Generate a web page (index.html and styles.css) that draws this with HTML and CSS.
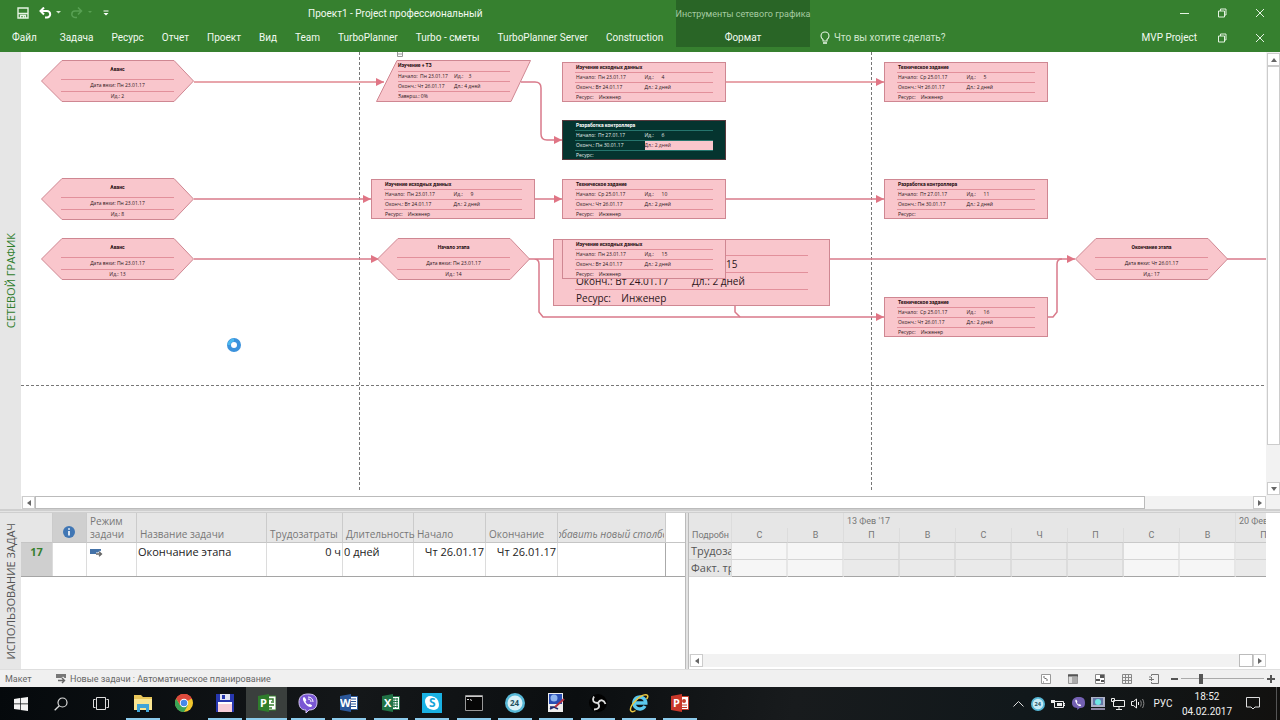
FILE: index.html
```
<!DOCTYPE html>
<html lang="ru">
<head>
<meta charset="utf-8">
<title>Проект1 - Project профессиональный</title>
<link rel="stylesheet" href="styles.css">
</head>
<body>
<header class="ribbon">
  <div class="ribbon-left">
    <div class="title-row">
      <div class="quick">
        <button class="qbtn" aria-label="Сохранить"><svg width="12" height="12" viewBox="0 0 12 12"><path d="M1 1h10v10H1z" fill="none" stroke="#e4f3e2" stroke-width="1.4"/><path d="M1 6.500h10M3.500 11V8.500h5V11M6.500 8.500V11" fill="none" stroke="#e4f3e2" stroke-width="1.300"/></svg></button>
        <button class="qbtn" aria-label="Отменить"><svg width="22" height="12" viewBox="0 0 22 12"><path d="M1.500 4H8a3.200 3.200 0 0 1 0 6.400H6" fill="none" stroke="#fff" stroke-width="2"/><path d="M5 .5L1.500 4 5 7.500" fill="none" stroke="#fff" stroke-width="2"/><path d="M17 4h5l-2.500 2.500z" fill="#cfe6cc"/></svg></button>
        <button class="qbtn" aria-label="Вернуть"><svg width="22" height="12" viewBox="0 0 22 12"><path d="M10.500 4H4a3.200 3.200 0 0 0 0 6.400h2M7 .5L10.500 4 7 7.500" fill="none" stroke="#58a053" stroke-width="1.500"/><path d="M17 4h4l-2 2z" fill="#58a053"/></svg></button>
        <button class="qbtn" aria-label="Настройка панели"><svg width="6" height="8" viewBox="0 0 6 8"><path d="M.5 2h5" stroke="#fff"/><path d="M.5 4h5L3 6.500z" fill="#fff"/></svg></button>
      </div>
      <h1 class="doc-title">Проект1 - Project профессиональный</h1>
    </div>
    <nav class="tabs">
      <button class="tab file">Файл</button>
      <button class="tab">Задача</button>
      <button class="tab">Ресурс</button>
      <button class="tab">Отчет</button>
      <button class="tab">Проект</button>
      <button class="tab">Вид</button>
      <button class="tab">Team</button>
      <button class="tab">TurboPlanner</button>
      <button class="tab">Turbo - сметы</button>
      <button class="tab">TurboPlanner Server</button>
      <button class="tab">Construction</button>
    </nav>
  </div>
  <div class="context">
    <div class="context-name">Инструменты сетевого графика</div>
    <button class="tab">Формат</button>
  </div>
  <div class="ribbon-right">
    <div class="win">
      <button class="wbtn" aria-label="Свернуть"><svg width="10" height="10" viewBox="0 0 10 10"><path d="M1 5.500h9" stroke="#e4f3e2"/></svg></button>
      <button class="wbtn" aria-label="Восстановить"><svg width="10" height="10" viewBox="0 0 10 10"><path d="M1.500 3h6v6h-6zM3.500 3V1h5.500v6H7.500" fill="none" stroke="#e4f3e2"/></svg></button>
      <button class="wbtn" aria-label="Закрыть"><svg width="10" height="10" viewBox="0 0 10 10"><path d="M1 1l8 8M9 1L1 9" stroke="#e4f3e2"/></svg></button>
    </div>
    <div class="win second">
      <button class="tell"><svg width="10" height="14" viewBox="0 0 10 14"><path d="M3 10V8.500C1.500 7.500 1 6.300 1 5a4 4 0 0 1 8 0c0 1.300-.5 2.500-2 3.500V10z" fill="none" stroke="#e4f3e2" stroke-width="1.100"/><path d="M3 12h4" stroke="#e4f3e2" stroke-width="1.600"/></svg>Что вы хотите сделать?</button>
      <span class="user">MVP Project</span>
      <button class="wbtn" aria-label="Восстановить окно"><svg width="10" height="10" viewBox="0 0 10 10"><path d="M1.500 3h6v6h-6zM3.500 3V1h5.500v6H7.500" fill="none" stroke="#e4f3e2"/></svg></button>
      <button class="wbtn" aria-label="Закрыть окно"><svg width="10" height="10" viewBox="0 0 10 10"><path d="M1 1l8 8M9 1L1 9" stroke="#e4f3e2"/></svg></button>
    </div>
  </div>
</header>

<main class="work">
  <section class="network">
    <div class="side active"><span>СЕТЕВОЙ ГРАФИК</span></div>
    <div class="net-main">
      <div class="canvas">
        <svg class="links" width="100%" height="100%">
          <defs>
            <marker id="arrow" markerUnits="userSpaceOnUse" markerWidth="9" markerHeight="8" refX="8" refY="4" orient="auto"><path d="M0 0l8 4-8 4z"/></marker>
          </defs>
          <g class="page-break">
            <path d="M338.500 0V440M850.500 0V440M0 333.500H1245"/>
          </g>
          <g class="link">
            <path class="pale" d="M173 30H363" marker-end="url(#arrow)"/>
            <path class="pale" d="M705 30H863" marker-end="url(#arrow)"/>
            <path d="M500 30H514Q520 30 520 36V82Q520 88 526 88H541" marker-end="url(#arrow)"/>
            <path d="M173 147H350" marker-end="url(#arrow)"/>
            <path d="M514 147H541" marker-end="url(#arrow)"/>
            <path d="M705 147H863" marker-end="url(#arrow)"/>
            <path d="M173 207H358" marker-end="url(#arrow)"/>
            <path d="M508 207H532M513 207Q518 207 518 212V260L522 265H863" marker-end="url(#arrow)"/>
            <path d="M714 254V260L719 265"/>
            <path d="M808 207H1054" marker-end="url(#arrow)"/>
            <path d="M1027 265H1032L1036 260V212Q1036 207 1041 207M1206 207H1245"/>
          </g>
          <path d="M376.500 -1v5.500h5V-1M377 2h4" fill="#fff" stroke="#999"/>
          <circle cx="213" cy="293" r="5" fill="none" stroke="#3c92dc" stroke-width="4"/>
          <path d="M208 293a5 5 0 0 1 5-5" fill="none" stroke="#4bb8ee" stroke-width="3"/>
        </svg>

        <div class="node stone" style="left:20px;top:8px"><svg class="shape" viewBox="0 0 153 42"><path d="M21 .5H133L152.500 21 133 41.500H21L.5 21z"/></svg><b>Аванс</b><span>Дата вехи: Пн 23.01.17</span><span>Ид.: 2</span></div>
        <div class="node stone" style="left:20px;top:126px"><svg class="shape" viewBox="0 0 153 42"><path d="M21 .5H133L152.500 21 133 41.500H21L.5 21z"/></svg><b>Аванс</b><span>Дата вехи: Пн 23.01.17</span><span>Ид.: 8</span></div>
        <div class="node stone" style="left:20px;top:186px"><svg class="shape" viewBox="0 0 153 42"><path d="M21 .5H133L152.500 21 133 41.500H21L.5 21z"/></svg><b>Аванс</b><span>Дата вехи: Пн 23.01.17</span><span>Ид.: 13</span></div>
        <div class="node stone" style="left:356px;top:186px"><svg class="shape" viewBox="0 0 153 42"><path d="M21 .5H133L152.500 21 133 41.500H21L.5 21z"/></svg><b>Начало этапа</b><span>Дата вехи: Пн 23.01.17</span><span>Ид.: 14</span></div>
        <div class="node stone" style="left:1054px;top:186px"><svg class="shape" viewBox="0 0 153 42"><path d="M21 .5H133L152.500 21 133 41.500H21L.5 21z"/></svg><b>Окончание этапа</b><span>Дата вехи: Чт 26.01.17</span><span>Ид.: 17</span></div>

        <div class="node summary" style="left:355px;top:8px"><svg class="shape" viewBox="0 0 155 42"><path d="M21 .5H154.500L135 41.500H.5z"/></svg><b>Изучение + ТЗ</b><p><span>Начало:  Пн 23.01.17</span><span>Ид.:    3</span></p><p><span>Оконч.: Чт 26.01.17</span><span>Дл.: 4 дней</span></p><p><span>Заверш.: 0%</span></p></div>

        <div class="node task" style="left:541px;top:10px"><b>Изучение исходных данных</b><p><span>Начало:  Пн 23.01.17</span><span>Ид.:      4</span></p><p><span>Оконч.: Вт 24.01.17</span><span>Дл.: 2 дней</span></p><p><span>Ресурс:    Инженер</span></p></div>
        <div class="node task" style="left:863px;top:10px"><b>Техническое задание</b><p><span>Начало:  Ср 25.01.17</span><span>Ид.:      5</span></p><p><span>Оконч.: Чт 26.01.17</span><span>Дл.: 2 дней</span></p><p><span>Ресурс:    Инженер</span></p></div>
        <div class="node task selected" style="left:541px;top:68px"><b>Разработка контроллера</b><p><span>Начало:  Пт 27.01.17</span><span>Ид.:      6</span></p><p><span>Оконч.: Пн 30.01.17</span><span class="cell">Дл.: 2 дней</span></p><p><span>Ресурс:</span></p></div>
        <div class="node task" style="left:350px;top:127px"><b>Изучение исходных данных</b><p><span>Начало:  Пн 23.01.17</span><span>Ид.:      9</span></p><p><span>Оконч.: Вт 24.01.17</span><span>Дл.: 2 дней</span></p><p><span>Ресурс:    Инженер</span></p></div>
        <div class="node task" style="left:541px;top:127px"><b>Техническое задание</b><p><span>Начало:  Ср 25.01.17</span><span>Ид.:      10</span></p><p><span>Оконч.: Чт 26.01.17</span><span>Дл.: 2 дней</span></p><p><span>Ресурс:    Инженер</span></p></div>
        <div class="node task" style="left:863px;top:127px"><b>Разработка контроллера</b><p><span>Начало:  Пт 27.01.17</span><span>Ид.:      11</span></p><p><span>Оконч.: Пн 30.01.17</span><span>Дл.: 2 дней</span></p><p><span>Ресурс:</span></p></div>
        <div class="node task zoomed" style="left:532px;top:187px"><b></b><p><span></span><span class="big-id">15</span></p><p><span>Оконч.: Вт 24.01.17</span><span>Дл.: 2 дней</span></p><p><span>Ресурс:    Инженер</span></p></div>
        <div class="node task" style="left:541px;top:187px"><b>Изучение исходных данных</b><p><span>Начало:  Пн 23.01.17</span><span>Ид.:      15</span></p><p><span>Оконч.: Вт 24.01.17</span><span>Дл.: 2 дней</span></p><p><span>Ресурс:    Инженер</span></p></div>
        <div class="node task" style="left:863px;top:245px"><b>Техническое задание</b><p><span>Начало:  Ср 25.01.17</span><span>Ид.:      16</span></p><p><span>Оконч.: Чт 26.01.17</span><span>Дл.: 2 дней</span></p><p><span>Ресурс:    Инженер</span></p></div>
      </div>
      <div class="hscroll">
        <button class="sbtn" aria-label="Влево"><svg width="4" height="6"><path d="M4 0v6L0 3z"/></svg></button>
        <div class="thumb grow-net"></div><div class="gap-net"></div>
        <button class="sbtn" aria-label="Вправо"><svg width="4" height="6"><path d="M0 0v6l4-3z"/></svg></button>
      </div>
    </div>
    <div class="vscroll">
      <button class="sbtn" aria-label="Вверх"><svg width="6" height="4"><path d="M0 4h6L3 0z"/></svg></button>
      <div class="thumb"></div><div class="vgap"></div>
      <button class="sbtn" aria-label="Вниз"><svg width="6" height="4"><path d="M0 0h6L3 4z"/></svg></button>
    </div>
  </section>
  <div class="splitter"></div>
  <section class="usage">
    <div class="side"><span>ИСПОЛЬЗОВАНИЕ ЗАДАЧ</span></div>
    <div class="sheet">
      <table class="tasks">
        <colgroup><col class="c-id"><col class="c-info"><col class="c-mode"><col class="c-name"><col class="c-work"><col class="c-dur"><col class="c-date"><col class="c-date"><col class="c-add"><col></colgroup>
        <thead><tr>
          <th></th>
          <th class="info"><svg width="12" height="12" viewBox="0 0 12 12" role="img" aria-label="Индикаторы"><circle cx="6" cy="6" r="6" fill="#4076b4"/><path d="M6 5v4.500M6 2.300v1.500" stroke="#fff" stroke-width="1.600"/></svg></th>
          <th class="mode">Режим задачи</th><th>Название задачи</th><th>Трудозатраты</th><th>Длительность</th><th>Начало</th><th>Окончание</th>
          <th class="add"><div><i>Добавить новый столбец</i></div></th><td class="rest"></td>
        </tr></thead>
        <tbody><tr>
          <td class="id">17</td><td></td>
          <td><svg width="13" height="9" viewBox="0 0 13 9"><path d="M0 1h11v5H0z" fill="#4472a8"/><path d="M6 6h5M9 3.500L11.500 6 9 8.500" fill="none" stroke="#fff" stroke-width="3"/><path d="M6 6h5M9 3.800L11.500 6 9 8.200" fill="none" stroke="#666" stroke-width="1.300"/></svg></td>
          <td>Окончание этапа</td><td class="num">0 ч</td><td>0 дней</td><td class="num">Чт 26.01.17</td><td class="num">Чт 26.01.17</td><td class="last"></td><td class="rest"></td>
        </tr></tbody>
      </table>
    </div>
    <div class="vsplit"></div>
    <div class="phases">
      <table class="scale">
        <colgroup><col class="c-detail"><col span="10" class="c-day"></colgroup>
        <thead>
          <tr><th rowspan="2" class="detail">Подробн</th><th colspan="2"></th><th colspan="7" class="week">13 Фев '17</th><th class="week">20 Фев '17</th></tr>
          <tr class="days"><th>С</th><th>В</th><th>П</th><th>В</th><th>С</th><th>Ч</th><th>П</th><th>С</th><th>В</th><th>П</th></tr>
        </thead>
        <tbody>
          <tr><th>Трудоза</th><td class="off"></td><td class="off"></td><td></td><td></td><td></td><td></td><td></td><td class="off"></td><td class="off"></td><td></td></tr>
          <tr><th>Факт. тр</th><td class="off"></td><td class="off"></td><td></td><td></td><td></td><td></td><td></td><td class="off"></td><td class="off"></td><td></td></tr>
        </tbody>
      </table>
      <div class="hscroll">
        <button class="sbtn" aria-label="Раньше"><svg width="4" height="6"><path d="M4 0v6L0 3z"/></svg></button>
        <div class="gap-fill"></div><div class="thumb small"></div>
        <button class="sbtn" aria-label="Позже"><svg width="4" height="6"><path d="M0 0v6l4-3z"/></svg></button>
      </div>
    </div>
  </section>
</main>

<footer class="status">
  <span class="layout-name">Макет</span>
  <button class="newtasks"><svg width="10" height="10" viewBox="0 0 10 10"><path d="M0 0h10v4H0z" fill="#777"/><path d="M2 6.500h6M6 3.500L9 6.500 6 9.500" fill="none" stroke="#eee" stroke-width="3"/><path d="M2 6.500h6.500M6 4l2.500 2.500L6 9" fill="none" stroke="#666" stroke-width="1.400"/></svg>Новые задачи : Автоматическое планирование</button>
  <div class="views">
    <button aria-label="Диаграмма Ганта"><svg width="10" height="10" viewBox="0 0 10 10"><path d="M.5.5h9v9h-9z" fill="#fff" stroke="#999"/><path d="M2 3h2M3.500 4.500h2M5 6h2M2 8h1" stroke="#666"/></svg></button>
    <button aria-label="Использование задач"><svg width="10" height="10" viewBox="0 0 10 10"><path d="M.5.5h9v9h-9z" fill="#ddd" stroke="#999"/><path d="M0 1.500h10" stroke="#555" stroke-width="2"/><path d="M4 4h5M4 6h5M4 8h5" stroke="#777"/></svg></button>
    <button aria-label="Планировщик групп"><svg width="10" height="10" viewBox="0 0 10 10"><path d="M.5.500h9v9h-9z" fill="#fff" stroke="#888"/><path d="M5 1h4v3H5zM1 5h4v2H1zM6 6h3v2H6z" fill="#555"/></svg></button>
    <button aria-label="Лист ресурсов"><svg width="10" height="10" viewBox="0 0 10 10"><path d="M.5.500h9v9h-9zM3.500 0v10M6.500 0v10M0 3.500h10M0 6.500h10" fill="none" stroke="#888"/></svg></button>
    <button aria-label="Отчет"><svg width="10" height="10" viewBox="0 0 10 10"><path d="M2.500 2V.5h7v9h-7V8M0 5.500h5M2.500 3v4M0 3h2" fill="none" stroke="#777"/></svg></button>
  </div>
  <div class="zoom">
    <button aria-label="Уменьшить"><svg width="7" height="8"><path d="M0 4h7" stroke="#555" stroke-width="2"/></svg></button>
    <input type="range" min="0" max="100" value="23" aria-label="Масштаб">
    <button aria-label="Увеличить"><svg width="8" height="8"><path d="M0 4h8M4 0v8" stroke="#555" stroke-width="2"/></svg></button>
  </div>
</footer>

<div class="taskbar">
  <div class="sys">
    <button aria-label="Пуск"><svg width="14" height="14" viewBox="0 0 14 14"><path d="M0 2l6-.9v5.500H0zM6.700 1L14 0v6.600H6.700zM0 7.300h6v5.500L0 12zM6.700 7.300H14V14l-7.300-1z" fill="#f4f4f4"/></svg></button>
    <button aria-label="Поиск"><svg width="14" height="14" viewBox="0 0 14 14"><circle cx="8.500" cy="5.500" r="4.500" fill="none" stroke="#ddd" stroke-width="1.200"/><path d="M5.300 8.700L.7 13.300" stroke="#ddd" stroke-width="1.300"/></svg></button>
    <button aria-label="Представление задач"><svg width="16" height="13" viewBox="0 0 16 13"><path d="M3.500.500h9v12h-9zM2.500 2.500h-2v8h2M13.500 2.500h2v8h-2" fill="none" stroke="#ddd"/></svg></button>
  </div>
  <div class="apps">
    <button class="run" aria-label="Проводник"><svg width="20" height="18" viewBox="0 0 20 18"><path d="M1 1h7l2 2h9v13H1z" fill="#e8c65a"/><path d="M1 5h18v11H1z" fill="#fae692"/><path d="M4 10h12v8h-3v-4H7v4H4z" fill="#41a5d8"/></svg></button>
    <button aria-label="Chrome"><svg width="18" height="18" viewBox="0 0 18 18"><circle cx="9" cy="9" r="9" fill="#f2c72e"/><path d="M9 9L1.200 4.500A9 9 0 0 1 16.800 4.500z" fill="#dc4a3d"/><path d="M1.200 4.500A9 9 0 0 0 9 18l3.900-6.700H5.100z" fill="#3aa357"/><path d="M8 4.900h9A9 9 0 0 0 1.200 4.500L5.100 11z" fill="#dc4a3d"/><circle cx="9" cy="9" r="4.200" fill="#fff"/><circle cx="9" cy="9" r="3.300" fill="#4587e8"/></svg></button>
    <button class="run" aria-label="Total Commander"><svg width="20" height="20" viewBox="0 0 20 20"><path d="M1 1h18v18H1z" fill="#2737ae"/><path d="M5 1h10v6H5z" fill="#e2e4f2"/><path d="M7 2h3v4H7z" fill="#2737ae"/><path d="M3 9h14v10H3z" fill="#f7cdd8"/><path d="M3 9h14v2H3z" fill="#fff"/></svg></button>
    <button class="run current" aria-label="Project"><svg width="18" height="18" viewBox="0 0 18 18"><path d="M9 2h9v14H9z" fill="#fff" stroke="#37802f"/><path d="M11 5h4v2M11 11h5M13 8h3M11 14h3" stroke="#37802f" stroke-width="1.500" fill="none"/><path d="M0 2L11 0v18L0 16z" fill="#2f7d2c"/><text x="2" y="13" class="glyph">P</text></svg></button>
    <button class="run" aria-label="Viber"><svg width="20" height="20" viewBox="0 0 20 20"><path d="M10 1c6 0 9 2 9 8s-3 8-8 8l-3 3v-3c-5 0-7-3-7-8s3-8 9-8z" fill="#7a57d4" stroke="#d7c9f5"/><path d="M6 4c-2 1-1 4 1.500 7s5.500 4 6.500 2c.5-1-1.500-2-2.500-2l-1 .6C9 11 8 10 7.500 8.500L8.300 7.500C8.300 6.500 7 4 6 4z" fill="#fff"/><path d="M10 4c3 0 5 2 5 5M10 6c2 0 3 1 3 3" fill="none" stroke="#fff"/></svg></button>
    <button class="run" aria-label="Word"><svg width="18" height="18" viewBox="0 0 18 18"><path d="M9 2.500h8.500v13H9z" fill="#fff" stroke="#2b579a"/><path d="M11 5h5M11 7.500h5M11 10h5M11 12.500h5" stroke="#2b579a" stroke-width="1.200"/><path d="M0 2L11 0v18L0 16z" fill="#2b579a"/><text x="0" y="13" class="glyph">W</text></svg></button>
    <button class="run" aria-label="Excel"><svg width="18" height="18" viewBox="0 0 18 18"><path d="M9 2.500h8.500v13H9z" fill="#fff" stroke="#217346"/><path d="M12 4v10M15 4v10M11 5h5M11 7.500h5M11 10h5M11 12.500h5" stroke="#217346"/><path d="M0 2L11 0v18L0 16z" fill="#217346"/><text x="2" y="13" class="glyph">X</text></svg></button>
    <button class="run" aria-label="Skype"><svg width="20" height="20" viewBox="0 0 20 20"><path d="M0 0h20v20H0z" fill="#19b1e3"/><circle cx="8" cy="8" r="5" fill="#fff"/><circle cx="12" cy="12" r="5" fill="#fff"/><circle cx="10" cy="10" r="6.500" fill="#fff"/><text x="7" y="14" class="glyph sky">S</text></svg></button>
    <button class="run" aria-label="Командная строка"><svg width="18" height="16" viewBox="0 0 18 16"><path d="M.5.500h17v15H.5z" fill="#060606" stroke="#999"/><path d="M1 1.500h16" stroke="#ccc"/><path d="M2 4.500h2M5 4.500l2 1" stroke="#ddd"/></svg></button>
    <button class="run" aria-label="Битрикс24"><svg width="20" height="20" viewBox="0 0 20 20"><circle cx="10" cy="10" r="10" fill="#57b8d7"/><circle cx="10" cy="10" r="7.500" fill="#d9f1f8"/><text x="5" y="13" class="glyph num24">24</text></svg></button>
    <button class="run" aria-label="Редактор"><svg width="18" height="19" viewBox="0 0 18 19"><path d="M1 0h15v19H1z" fill="#eee"/><path d="M2 1h13v10H2z" fill="#284db3"/><circle cx="7" cy="5" r="3.500" fill="#8eb4f0"/><path d="M3 14h6M3 16l4-2 4 2" stroke="#222b70" stroke-width="1.500" fill="none"/><path d="M17 6L8 14" stroke="#b33040" stroke-width="2"/></svg></button>
    <button class="run" aria-label="OBS"><svg width="18" height="18" viewBox="0 0 18 18"><circle cx="9" cy="9" r="9" fill="#020202"/><path d="M9 9C4 9 3 6 5 2.500M9 9c2.500-4.500 6-3 7.500 1M9 9c2.500 4 .5 6.500-4 6.500" fill="none" stroke="#ddd" stroke-width="1.800"/></svg></button>
    <button class="run" aria-label="Internet Explorer"><svg width="20" height="20" viewBox="0 0 20 20"><path d="M16 13a6 6 0 1 1 .8-3H6" fill="none" stroke="#5cc9ee" stroke-width="3.400"/><path d="M2 18C-1 14 12 0 18 2c1.500 1 .5 3-.5 4M2 18c1 1 3 .5 4.500-.5" fill="none" stroke="#edc83f" stroke-width="1.500"/></svg></button>
    <button class="run" aria-label="PowerPoint"><svg width="18" height="18" viewBox="0 0 18 18"><path d="M9 2.500h8.500v13H9z" fill="#fff" stroke="#c43e2b"/><circle cx="13" cy="7" r="2" fill="#c43e2b"/><path d="M11 11h5M11 13.500h5" stroke="#c43e2b" stroke-width="1.200"/><path d="M0 2L11 0v18L0 16z" fill="#c9382a"/><text x="2" y="13" class="glyph">P</text></svg></button>
  </div>
  <div class="tray">
    <button aria-label="Скрытые значки"><svg width="11" height="6" viewBox="0 0 11 6"><path d="M.5 5.500l5-5 5 5" fill="none" stroke="#ddd"/></svg></button>
    <button aria-label="Битрикс24"><svg width="14" height="14" viewBox="0 0 20 20"><circle cx="10" cy="10" r="10" fill="#57b8d7"/><circle cx="10" cy="10" r="7.500" fill="#c5eaf5"/><text x="5" y="13" class="glyph num24">24</text></svg></button>
    <button aria-label="Батарея"><svg width="14" height="10" viewBox="0 0 14 10"><path d="M3.500 2.500h9v6h-9zM13 4.500h1v2h-1" fill="none" stroke="#eee"/><path d="M6 4h5v3H6z" fill="#eee"/><path d="M0 1h4v3H0z" fill="#eee"/></svg></button>
    <button aria-label="Viber"><svg width="13" height="13" viewBox="0 0 20 20"><path d="M10 0c7 0 10 2 10 9s-3 8-8 8l-4 3v-3c-5 0-8-3-8-8s3-9 10-9z" fill="#7360b2"/><path d="M6 4c-2 1-1 4 1.500 7s5.500 4 6.500 2c.5-1-1.500-2-2.500-2l-1 .6C9 11 8 10 7.500 8.500L8.300 7.500C8.300 6.500 7 4 6 4z" fill="#fff"/></svg></button>
    <button aria-label="Подключение"><svg width="14" height="13" viewBox="0 0 14 13"><path d="M0 0h14v10H0z" fill="#aeb3c9"/><path d="M2 1h10v7H2z" fill="#6578a8"/><circle cx="7" cy="5" r="3" fill="#6ee6e4"/><path d="M0 11h14v2H0z" fill="#8b85a2"/></svg></button>
    <button aria-label="Сеть"><svg width="14" height="12" viewBox="0 0 14 12"><path d="M2.500 2.500h11v6h-11zM8 9v2M5 11.500h6M.5.500h3v3h-3z" fill="none" stroke="#eee"/></svg></button>
    <button aria-label="Громкость"><svg width="14" height="11" viewBox="0 0 14 11"><path d="M.5 3.500h2L5.500 1v9L2.500 7.500h-2zM7.500 4v3" fill="none" stroke="#eee"/><path d="M9.500 2.500c1 2 1 4 0 6M11.500 1c1.800 3 1.800 6 0 9" fill="none" stroke="#888"/></svg></button>
    <span class="lang">РУС</span>
    <time class="clock">18:52<br>04.02.2017</time>
    <button class="note" aria-label="Уведомления"><svg width="14" height="13" viewBox="0 0 14 13"><path d="M.5.500h13v9.500H9l-2 2-2-2H.5z" fill="none" stroke="#ddd"/></svg></button>
    <button class="desk" aria-label="Показать рабочий стол"></button>
  </div>
</div>
</body>
</html>
```
FILE: styles.css
```
* { box-sizing: border-box; }
body {
  margin: 0;
  height: 100vh;
  display: flex;
  flex-direction: column;
  overflow: hidden;
  font: 11px/16px "Open Sans", "Noto Sans", sans-serif;
  color: #333;
  background: #fff;
}
button { font: inherit; color: inherit; background: none; border: 0; padding: 0; margin: 0; display: flex; align-items: center; justify-content: center; }
svg { display: block; flex: none; }
p { margin: 0; }

/* Ribbon */
.ribbon { display: flex; flex: none; height: 52px; background: #36802f; color: #f2faf1; font-family: Roboto, "Open Sans", sans-serif; font-size: 10px; }
.ribbon-left { width: 676px; flex: none; }
.title-row { display: flex; height: 26px; align-items: center; padding-left: 17px; }
.quick { display: flex; gap: 10px; width: 291px; align-items: center; }
.doc-title { font-size: 10px; font-weight: 400; margin: 2px 0 0; white-space: nowrap; }
.tabs { display: flex; height: 24px; gap: 18px; padding-left: 12px; }
.tab { white-space: nowrap; }
.tab.file { margin-right: 5px; }
.context { flex: none; width: 134px; height: 47px; background: #296526; display: flex; flex-direction: column; align-items: center; }
.context-name { flex: none; height: 26px; padding-top: 6px; color: #a5cba1; white-space: nowrap; font-size: 9px; }
.context .tab { flex: none; height: 24px; }
.ribbon-right { flex: 1; }
.win { display: flex; height: 26px; justify-content: flex-end; align-items: center; padding-right: 1px; }
.win.second { height: 24px; }
.wbtn { width: 38px; height: 22px; }
.tell { gap: 4px; margin-left: 10px; margin-right: auto; color: #cfe6cc; }
.user { margin-right: 6px; }

/* Work area */
.work { flex: 1; min-height: 0; display: flex; flex-direction: column; }
.network { flex: 457 1 0; min-height: 0; display: flex; }
.side { flex: none; width: 21px; background: #e6e6e6; display: flex; align-items: center; justify-content: center; color: #555; }
.side span { writing-mode: vertical-rl; transform: rotate(180deg); white-space: nowrap; font-size: 11px; line-height: 21px; }
.side.active { color: #2f7d2c; }
.net-main { flex: 1; min-width: 0; display: flex; flex-direction: column; }
.canvas { flex: 1; position: relative; overflow: hidden; background: #fff; }
.links { position: absolute; inset: 0; }
.page-break path { fill: none; stroke: #777; stroke-dasharray: 3 2; }
.link path { fill: none; stroke: #d97a8a; stroke-width: 1.5; }
.link .pale { stroke: #e8a5ab; stroke-width: 2; }
marker path { fill: #e07585; }

.node { position: absolute; font-size: 5px; line-height: 9px; color: #2c1519; white-space: pre; }
.node b, .node p { display: grid; border-bottom: 1px solid #e2909b; }
.node > :last-child { border-bottom: 0; }
.node b { color: #1c0a0d; font-family: Roboto, sans-serif; }
.task { width: 164px; height: 40px; padding: 0 12px; background: #f9c6cc; border: 1px solid #cf8792; }
.task b, .task p { height: 10px; padding-left: 1px; grid-template-columns: 1fr 1fr; }
.task b { grid-template-columns: 1fr; }
.task p span { min-width: 0; }
.task.selected { background: #05342f; border-color: #59393d; color: #e4efed; }
.selected b { color: #fff; }
.selected b, .selected p { border-color: #25756d; }
.selected .cell { background: #f9c6cc; color: #452328; }
.task.zoomed { width: 277px; height: 67px; padding: 0 21px; font-size: 10px; line-height: 16px; }
.zoomed b, .zoomed p { height: 17px; }
.zoomed b { height: 16px; }
.big-id { padding-left: 34px; }
.stone { width: 153px; height: 42px; padding: 1px 20px 0; text-align: center; display: flex; flex-direction: column; }
.stone b { height: 19px; line-height: 17px; }
.stone span { height: 12px; line-height: 11px; border-bottom: 1px solid #e2909b; }
.stone > :last-child { height: 9px; line-height: 9px; }
.shape { position: absolute; inset: 0; width: 100%; height: 100%; z-index: -1; }
.stone, .summary { z-index: 1; }
.shape path { fill: #f9c6cc; stroke: #cf8792; }
.summary { width: 155px; height: 42px; padding: 1px 21px 0 22px; }
.summary b { height: 11px; }
.summary p { height: 10px; grid-template-columns: 1fr 1fr; }

/* Scroll bars */
.hscroll { flex: none; display: flex; height: 13px; background: #f2f2f2; padding-left: 1px; }
.sbtn { width: 13px; height: 13px; flex: none; border: 1px solid #ccc; background: #fff; }
.sbtn path { fill: #666; }
.thumb { background: #fff; border: 1px solid #bbb; }
.grow-net { flex: 1110 1 0; }
.gap-net { flex: 108 1 0; }
.gap-fill { flex: 1; }
.small { width: 14px; }
.vscroll { flex: none; width: 14px; display: flex; flex-direction: column; background: #f2f2f2; padding: 1px 0 14px 1px; }
.vscroll .thumb { flex: 380 1 0; border-color: #ccc; }
.vgap { flex: 37 1 0; }

/* Bottom pane */
.splitter { flex: none; height: 4px; background: #e4e4e4; border-top: 2px solid #cfcfcf; border-bottom: 1px solid #cfcfcf; }
.usage { flex: 156 1 0; min-height: 0; display: flex; padding-right: 14px; }
.sheet { flex: 664 1 0; min-width: 0; overflow: hidden; }
.vsplit { flex: none; width: 4px; background: #e2e2e2; border-left: 1px solid #bbb; border-right: 1px solid #bbb; }
.phases { flex: 577 1 0; min-width: 0; overflow: hidden; display: flex; flex-direction: column; justify-content: space-between; padding-bottom: 2px; }
table { border-collapse: separate; border-spacing: 0; table-layout: fixed; }
.c-id { width: 32px; } .c-info { width: 34px; } .c-mode { width: 50px; } .c-name { width: 130px; }
.c-work { width: 76px; } .c-dur { width: 71px; } .c-date { width: 72px; } .c-add { width: 108px; }
.tasks { width: 100%; border-bottom: 1px solid #a5a5a5; }
.tasks th { height: 30px; padding: 0 0 1px 3px; vertical-align: bottom; text-align: left; font-weight: 400; font-size: 10px; line-height: 13px; color: #777; background: #e6e6e6; border-right: 1px solid #cbcbcb; border-bottom: 1px solid #c5c5c5; white-space: nowrap; }
.tasks th.mode { white-space: normal; }
.tasks th.info { background: #cfcfcf; padding: 0 0 4px 10px; }
.tasks th.add { padding: 0 1px 1px; }
.add div { display: flex; justify-content: center; overflow: hidden; }
.tasks td { height: 33px; padding: 1px 1px 0; vertical-align: top; color: #222; border-right: 1px solid #dcdcdc; white-space: nowrap; }
.tasks td.last { border-right-color: #aaa; }
.tasks td.rest { border-right: 0; }
.tasks thead td.rest { height: 30px; border-bottom: 1px solid #c5c5c5; }
.tasks td svg { margin: 4px 0 0 2px; }
.tasks .num { text-align: right; }
.tasks td.id { background: #cfcfcf; color: #37802f; font-weight: 700; text-align: center; }
.scale { width: 603px; }
.c-detail { width: 43px; } .c-day { width: 56px; }
.scale th { background: #e6e6e6; color: #777; font-weight: 400; font-family: Roboto, sans-serif; font-size: 9px; line-height: 14px; padding: 0; text-align: center; height: 15px; overflow: hidden; white-space: nowrap; border-right: 1px solid #dcdcdc; }
.scale .week { text-align: left; padding-left: 3px; }
.scale .days th { border-bottom: 1px solid #c9c9c9; }
.scale th.detail { vertical-align: bottom; text-align: left; padding-left: 3px; border-bottom: 1px solid #c9c9c9; }
.scale tbody th { font-family: inherit; font-size: 11px; text-align: left; padding-left: 2px; color: #555; line-height: 16px; height: 17px; border-bottom: 1px solid #d5d5d5; }
.scale td { background: #eaeaea; border-right: 2px solid #dcdcdc; border-bottom: 1px solid #d5d5d5; padding: 0; height: 17px; }
.scale td.off { background: #f6f6f6; border-right-color: #e6e6e6; }
.scale tbody tr:last-child td { border-bottom-color: #a5a5a5; }

/* Status bar */
.status { flex: none; height: 18px; display: flex; align-items: center; background: #f0f0f0; border-top: 1px solid #dedede; font-family: Roboto, "Open Sans", sans-serif; font-size: 9px; color: #666; padding: 0 5px; }
.layout-name { width: 51px; }
.newtasks { gap: 4px; }
.views { display: flex; gap: 17px; margin-left: auto; }
.zoom { display: flex; align-items: center; gap: 3px; margin-left: 12px; }
.zoom input { appearance: none; width: 83px; height: 10px; margin: 0; background: linear-gradient(#aaa, #aaa) center / 100% 1px no-repeat; }
.zoom input::-webkit-slider-thumb { appearance: none; width: 4px; height: 10px; background: #555; border-radius: 0; }

/* Taskbar */
.taskbar { flex: none; height: 33px; display: flex; color: #f0f0f0; background: linear-gradient(100deg, #05090c, #141719 28%, #0b0e10 45%, #181b1d 62%, #11181b 80%, #12110f); }
.sys { flex: none; display: flex; }
.sys button { width: 41px; }
.sys button:nth-child(n+2) { width: 40px; }
.apps { flex: none; width: 579px; display: flex; margin-left: 1px; }
.apps button { flex: 1 1 0; min-width: 0; padding-bottom: 2px; }
.apps .run { background: linear-gradient(#8ccbec, #8ccbec) bottom / 34px 2px no-repeat; }
.apps .current { background: linear-gradient(#8ccbec, #8ccbec) bottom / 100% 2px no-repeat, #3a3f3d; }
.glyph { font: 700 11px "Open Sans", sans-serif; fill: #fff; }
.glyph.sky { fill: #19a5d8; font-size: 12px; }
.glyph.num24 { fill: #24505f; font-size: 8px; }
.tray { margin-left: auto; display: flex; align-items: center; font-family: Roboto, "Open Sans", sans-serif; font-size: 10px; }
.tray button { width: 20px; }
.lang { width: 30px; text-align: center; }
.clock { width: 58px; text-align: center; line-height: 15px; }
.tray .note { width: 34px; margin-right: 6px; }
.tray .desk { width: 4px; height: 33px; border-left: 1px solid #555; }
```
